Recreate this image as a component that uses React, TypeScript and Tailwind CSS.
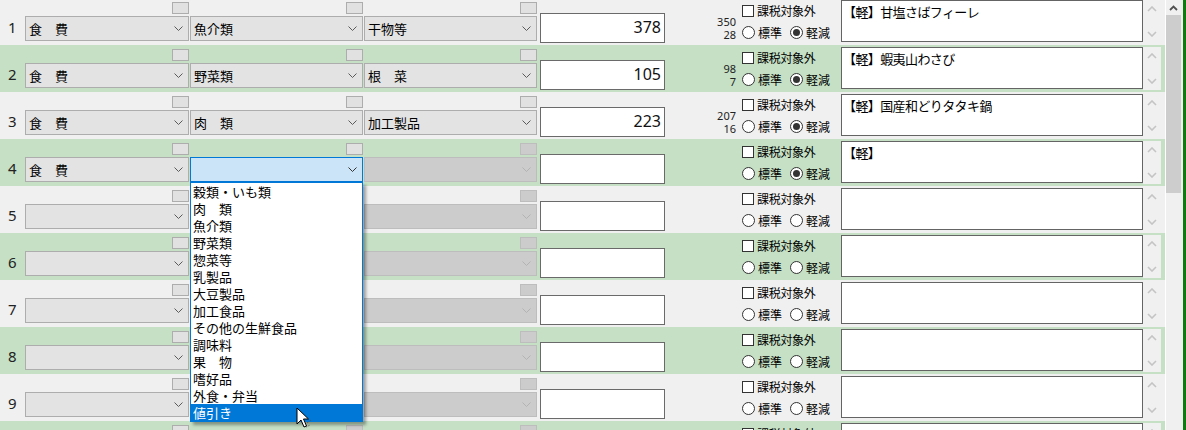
import React from 'react';

type ComboState = 'normal' | 'focus' | 'disabled';

interface RowData {
  n: number;
  c1: string;
  c2: string;
  c3: string;
  amount: string;
  base: string;
  tax: string;
  memo: string;
  keigen: boolean;
  s1: ComboState;
  s2: ComboState;
  s3: ComboState;
}

const filled: RowData[] = [
  { n: 1, c1: '食　費', c2: '魚介類', c3: '干物等', amount: '378', base: '350', tax: '28', memo: '【軽】甘塩さばフィーレ', keigen: true, s1: 'normal', s2: 'normal', s3: 'normal' },
  { n: 2, c1: '食　費', c2: '野菜類', c3: '根　菜', amount: '105', base: '98', tax: '7', memo: '【軽】蝦夷山わさび', keigen: true, s1: 'normal', s2: 'normal', s3: 'normal' },
  { n: 3, c1: '食　費', c2: '肉　類', c3: '加工製品', amount: '223', base: '207', tax: '16', memo: '【軽】国産和どりタタキ鍋', keigen: true, s1: 'normal', s2: 'normal', s3: 'normal' },
  { n: 4, c1: '食　費', c2: '', c3: '', amount: '', base: '', tax: '', memo: '【軽】', keigen: true, s1: 'normal', s2: 'focus', s3: 'disabled' },
];

const rows: RowData[] = [
  ...filled,
  ...[5, 6, 7, 8, 9, 10].map((n) => ({
    n,
    c1: '',
    c2: '',
    c3: '',
    amount: '',
    base: '',
    tax: '',
    memo: '',
    keigen: false,
    s1: 'normal' as ComboState,
    s2: 'disabled' as ComboState,
    s3: 'disabled' as ComboState,
  })),
];

const options = [
  '穀類・いも類',
  '肉　類',
  '魚介類',
  '野菜類',
  '惣菜等',
  '乳製品',
  '大豆製品',
  '加工食品',
  'その他の生鮮食品',
  '調味料',
  '果　物',
  '嗜好品',
  '外食・弁当',
  '値引き',
];

function Chevron({ color }: { color: string }) {
  return (
    <svg width="9" height="5" viewBox="0 0 9 5" className="shrink-0">
      <polyline points="0.5,0.5 4.5,4.5 8.5,0.5" fill="none" stroke={color} strokeWidth="1" />
    </svg>
  );
}

function ComboColumn({ text, state, width }: { text: string; state: ComboState; width: string }) {
  const box =
    state === 'disabled'
      ? 'bg-[#cccccc] border-[#bdbdbd]'
      : 'bg-[#e1e1e1] border-[#adadad]';
  const combo =
    state === 'focus'
      ? 'bg-[#cce4f7] border-[#0078d7]'
      : state === 'disabled'
        ? 'bg-[#cccccc] border-[#bdbdbd]'
        : 'bg-[#e3e3e3] border-[#adadad]';
  const chev = state === 'focus' ? '#333333' : state === 'disabled' ? '#b3b3b3' : '#5a5a5a';
  return (
    <div className={`${width} flex flex-col items-end shrink-0`}>
      <div className={`mt-[4px] h-[12px] w-[17px] border ${box}`} />
      <div className={`mt-[2px] h-[25px] w-full border flex items-center pl-[3px] pr-[5px] ${combo}`}>
        <span className="flex-1 text-[13px] leading-[16px] text-black whitespace-nowrap">{text}</span>
        <Chevron color={chev} />
      </div>
    </div>
  );
}

function Radio({ checked }: { checked: boolean }) {
  return (
    <span className="w-[13px] h-[13px] rounded-full border border-[#333333] bg-white flex items-center justify-center shrink-0">
      {checked && <span className="w-[7px] h-[7px] rounded-full bg-[#333333]" />}
    </span>
  );
}

function SmallChevron({ up }: { up: boolean }) {
  return (
    <svg width="10" height="6" viewBox="0 0 10 6">
      <polyline
        points={up ? '1,5 5,1 9,5' : '1,1 5,5 9,1'}
        fill="none"
        stroke="#c4c4c4"
        strokeWidth="1.6"
      />
    </svg>
  );
}

function Row({ r }: { r: RowData }) {
  const green = r.n % 2 === 0;
  return (
    <div className={`flex h-[47px] w-[1165px] shrink-0 ${green ? 'bg-[#c5e0c5]' : 'bg-[#f0f0f0]'}`}>
      <div className="w-[25px] shrink-0 pl-[8px] pt-[19px] text-[15px] leading-[20px] text-[#222] font-['Noto_Sans',sans-serif]">
        {r.n}
      </div>
      <ComboColumn text={r.c1} state={r.s1} width="w-[164px]" />
      <div className="w-[1px] shrink-0" />
      <ComboColumn text={r.c2} state={r.s2} width="w-[173px]" />
      <div className="w-[1px] shrink-0" />
      <ComboColumn text={r.c3} state={r.s3} width="w-[173px]" />
      <div className="ml-[3px] mt-[15px] h-[30px] w-[125px] shrink-0 border border-[#6a6a6a] bg-white flex items-center justify-end pr-[3px] pb-[3px] text-[16px] text-[#111] font-['Noto_Sans',sans-serif]">
        {r.amount}
      </div>
      <div className="w-[176px] shrink-0 flex">
        <div className="w-[71px] pt-[17px] text-right text-[11px] leading-[13px] text-[#222] font-['Noto_Sans',sans-serif]">
          <div>{r.base}</div>
          <div>{r.tax}</div>
        </div>
        <div className="ml-[6px] flex flex-col">
          <div className="mt-[6px] h-[13px] flex items-center gap-[3px]">
            <span className="w-[12px] h-[12px] border border-[#333333] bg-white shrink-0" />
            <span className="text-[12px] leading-[13px] tracking-[-0.3px] text-black whitespace-nowrap">課税対象外</span>
          </div>
          <div className="mt-[9px] h-[13px] flex items-center">
            <Radio checked={false} />
            <span className="ml-[3px] text-[12px] leading-[13px] text-black">標準</span>
            <span className="ml-[8px]">
              <Radio checked={r.keigen} />
            </span>
            <span className="ml-[3px] text-[12px] leading-[13px] text-black">軽減</span>
          </div>
        </div>
      </div>
      <div className="mt-[2px] h-[42px] w-[302px] shrink-0 border border-[#646464] bg-white pl-[1px] pt-[3px] text-[13px] leading-[16px] tracking-[-0.6px] text-black whitespace-nowrap overflow-hidden">
        {r.memo}
      </div>
      <div className="mt-[2px] h-[43px] w-[18px] shrink-0 bg-[#f0f0f0] flex flex-col items-center justify-between pt-[6px] pb-[6px]">
        <SmallChevron up />
        <SmallChevron up={false} />
      </div>
    </div>
  );
}

export default function App() {
  return (
    <div className="relative w-[1186px] h-[430px] overflow-hidden bg-[#f0f0f0] flex font-['Noto_Sans_CJK_JP','Noto_Sans',sans-serif]">
      <div className="w-[1165px] shrink-0 flex flex-col -mt-[2px]">
        {rows.map((r) => (
          <Row key={r.n} r={r} />
        ))}
      </div>
      <div className="w-[1px] shrink-0 bg-white" />
      <div className="w-[17px] shrink-0 bg-[#f0f0f0] flex flex-col">
        <div className="h-[15px] w-[15px] flex items-center justify-center">
          <svg width="9" height="6" viewBox="0 0 9 6">
            <polyline points="1,5 4.5,1.5 8,5" fill="none" stroke="#505050" strokeWidth="1.8" />
          </svg>
        </div>
        <div className="h-[178px] w-[15px] bg-[#cdcdcd]" />
      </div>
      <div className="w-[3px] shrink-0 bg-[#0f7b0f]" />

      {/* open dropdown list of row 4 */}
      <div className="absolute left-[190px] top-[182px] w-[173px] border border-[#0078d7] bg-white shadow-[3px_3px_3px_rgba(0,0,0,0.35)]">
        {options.map((o) => (
          <div
            key={o}
            className={`h-[17px] pl-[2px] text-[13px] leading-[17px] whitespace-nowrap ${
              o === '値引き' ? 'bg-[#0078d7] text-white' : 'text-black'
            }`}
          >
            {o}
          </div>
        ))}
      </div>

      {/* mouse pointer */}
      <svg className="absolute left-[296px] top-[407px]" width="16" height="22" viewBox="0 0 16 22">
        <path d="M1 1 L1 17 L5 13 L8 20 L10.5 19 L7.5 12 L12.5 12 Z" fill="white" stroke="black" strokeWidth="1" />
        <path d="M11 16 L15 13 M10 20 L14 18" stroke="#555" strokeWidth="1" strokeDasharray="1 1" />
      </svg>
    </div>
  );
}
